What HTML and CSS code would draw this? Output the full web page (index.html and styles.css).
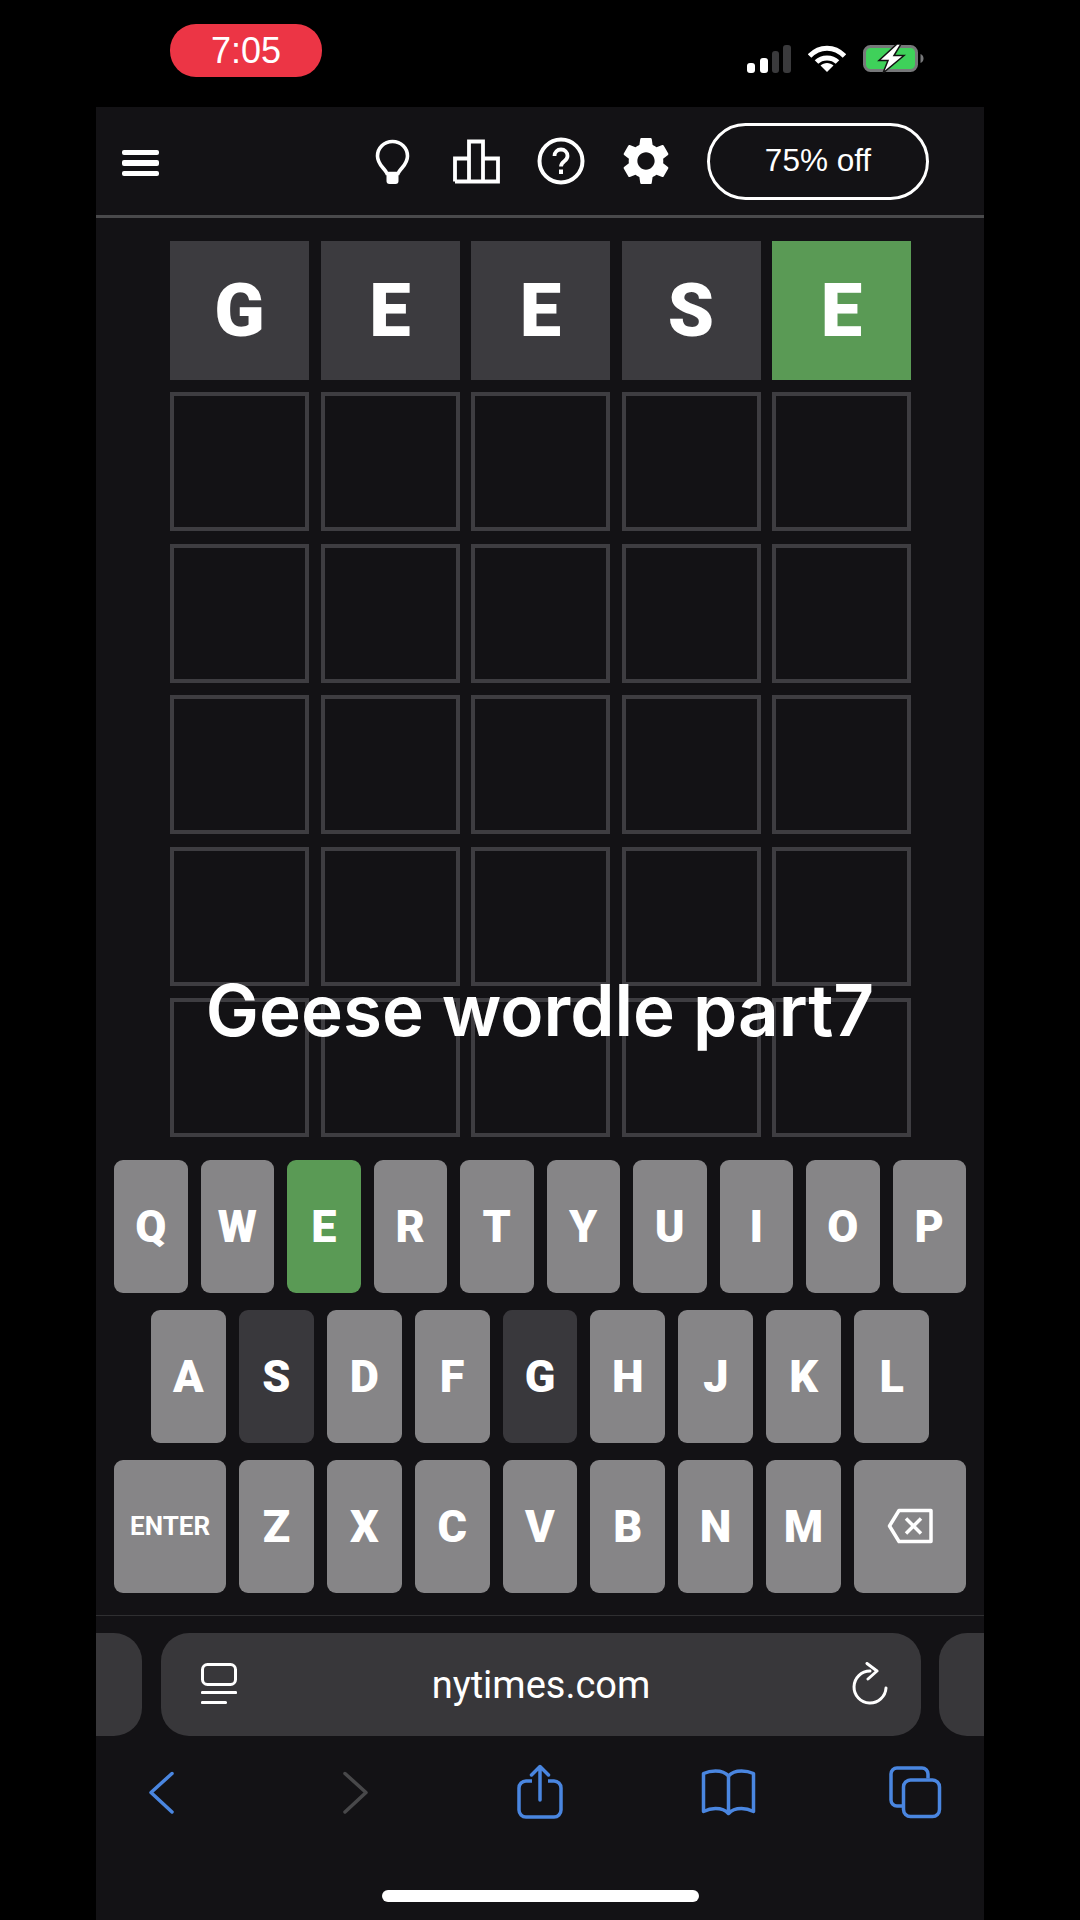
FILE: index.html
```html
<!DOCTYPE html>
<html lang="en">
<head>
  <meta charset="UTF-8" />
  <meta name="viewport" content="width=device-width, initial-scale=1.0"/>
  <title>Wordle</title>
  <link rel="stylesheet" href="styles.css">
</head>
<body>
  <div class="phone">
    <div class="status-bar">
      <div class="clock">7:05</div>
      <div class="status-icons">
        <svg width="44" height="28" viewBox="0 0 44 28">
          <rect x="0" y="18" width="8" height="10" rx="3" fill="#fff"/>
          <rect x="13" y="13" width="8" height="15" rx="3" fill="#fff"/>
          <rect x="25" y="6" width="7" height="22" rx="3" fill="#3a3a3c"/>
          <rect x="36" y="0" width="8" height="28" rx="3" fill="#3a3a3c"/>
        </svg>
        <svg width="38" height="27" viewBox="0 0 38 27">
          <path d="M1.500 11C11.500 .5 26.500 .5 36.500 11" fill="none" stroke="#fff" stroke-width="5"/>
          <path d="M8.500 17C14 11.500 24 11.500 29.500 17" fill="none" stroke="#fff" stroke-width="5"/>
          <path d="M12.500 20.500C16 17 22 17 25.500 20.500L19 27z" fill="#fff"/>
        </svg>
        <svg width="61" height="29" viewBox="0 0 61 29">
          <rect x="1.500" y="2.500" width="52" height="24" rx="6" fill="#3fd15a" stroke="#77787a" stroke-width="3"/>
          <path d="M57.500 10v9c2-.5 3-2.500 3-4.500s-1-4-3-4.500z" fill="#77787a"/>
          <path d="M34 0L16 16.500h9L20 29l21-17.500H31L38 0z" fill="#fff" stroke="#111" stroke-width="1.500"/>
        </svg>
      </div>
    </div>

    <header class="game-header">
      <svg class="menu-icon" width="37" height="26" viewBox="0 0 37 26">
        <rect x="0" y="0" width="37" height="5" rx="2" fill="#fff"/>
        <rect x="0" y="10" width="37" height="6" rx="2" fill="#fff"/>
        <rect x="0" y="21" width="37" height="5" rx="2" fill="#fff"/>
      </svg>
      <div class="header-tools">
        <svg width="48" height="48" viewBox="0 0 48 48">
          <g transform="translate(1 0)">
            <path d="M24.500 4.500c-8.500 0-15 6.500-15 14.500 0 6 3 9 6 12.500 2 2.300 3 3.500 3.500 5h11c.5-1.500 1.500-2.700 3.500-5 3-3.500 6-6.500 6-12.500 0-8-6.500-14.500-15-14.500z" fill="none" stroke="#fff" stroke-width="3.600"/>
            <rect x="18.500" y="35" width="12" height="12" rx="3" fill="#fff"/>
          </g>
        </svg>
        <svg width="48" height="48" viewBox="0 0 48 48">
          <path d="M3 44.500V21.500H17M17 44.500V4.500H31V44.500M31 21.500H46V44.500H3" fill="none" stroke="#fff" stroke-width="3.800"/>
        </svg>
        <svg width="48" height="48" viewBox="0 0 48 48">
          <circle cx="24" cy="24" r="21.500" fill="none" stroke="#fff" stroke-width="4"/>
          <path d="M17.500 19c0-4 2.800-6.500 6.500-6.500s6.500 2.500 6.500 6.500c0 5.500-6.500 5-6.500 10.500" fill="none" stroke="#fff" stroke-width="3.800"/>
          <rect x="22" y="32.500" width="4" height="4.500" fill="#fff"/>
        </svg>
        <svg width="48" height="48" viewBox="2 2 20 20">
          <path fill="#fff" d="M19.140 12.940c.04-.3.06-.61.06-.94 0-.32-.02-.64-.07-.94l2.030-1.580c.18-.14.23-.41.12-.61l-1.920-3.320c-.12-.22-.37-.29-.59-.22l-2.390.96c-.5-.38-1.030-.7-1.620-.94l-.36-2.540c-.04-.24-.24-.41-.48-.41h-3.840c-.24 0-.43.17-.47.41l-.36 2.540c-.59.24-1.130.57-1.620.94l-2.390-.96c-.22-.08-.47 0-.59.22L2.740 8.870c-.12.21-.08.47.12.61l2.030 1.580c-.05.3-.09.63-.09.94s.02.64.07.94l-2.030 1.580c-.18.14-.23.41-.12.61l1.920 3.320c.12.22.37.29.59.22l2.390-.96c.5.38 1.030.7 1.620.94l.36 2.540c.05.24.24.41.48.41h3.840c.24 0 .44-.17.47-.41l.36-2.540c.59-.24 1.130-.56 1.620-.94l2.390.96c.22.08.47 0 .59-.22l1.920-3.320c.12-.22.07-.47-.12-.61l-2.010-1.580zM12 15.600c-1.980 0-3.600-1.620-3.600-3.600s1.620-3.600 3.600-3.600 3.600 1.620 3.600 3.600-1.620 3.600-3.600 3.600z"/>
        </svg>
        <div class="offer-pill">75% off</div>
      </div>
    </header>

    <main class="board">
      <div class="tile absent">G</div>
      <div class="tile absent">E</div>
      <div class="tile absent">E</div>
      <div class="tile absent">S</div>
      <div class="tile correct">E</div>
      <div class="tile"></div><div class="tile"></div><div class="tile"></div><div class="tile"></div><div class="tile"></div>
      <div class="tile"></div><div class="tile"></div><div class="tile"></div><div class="tile"></div><div class="tile"></div>
      <div class="tile"></div><div class="tile"></div><div class="tile"></div><div class="tile"></div><div class="tile"></div>
      <div class="tile"></div><div class="tile"></div><div class="tile"></div><div class="tile"></div><div class="tile"></div>
      <div class="tile"></div><div class="tile"></div><div class="tile"></div><div class="tile"></div><div class="tile"></div>
    </main>

    <section class="keyboard">
      <div class="key-row">
        <div class="key">Q</div><div class="key">W</div><div class="key correct">E</div><div class="key">R</div><div class="key">T</div>
        <div class="key">Y</div><div class="key">U</div><div class="key">I</div><div class="key">O</div><div class="key">P</div>
      </div>
      <div class="key-row middle">
        <div class="key">A</div><div class="key absent">S</div><div class="key">D</div><div class="key">F</div><div class="key absent">G</div>
        <div class="key">H</div><div class="key">J</div><div class="key">K</div><div class="key">L</div>
      </div>
      <div class="key-row">
        <div class="key wide enter">ENTER</div>
        <div class="key">Z</div><div class="key">X</div><div class="key">C</div><div class="key">V</div><div class="key">B</div><div class="key">N</div><div class="key">M</div>
        <div class="key wide">
          <svg width="46" height="36" viewBox="0 0 46 36">
            <path d="M12 2.500H44V33.500H12L2.500 18z" fill="none" stroke="#fff" stroke-width="3.500" stroke-linejoin="round"/>
            <path d="M19 10.500L34 25.500M34 10.500L19 25.500" fill="none" stroke="#fff" stroke-width="3.500"/>
          </svg>
        </div>
      </div>
    </section>

    <div class="caption">Geese wordle part7</div>

    <footer class="browser-bar">
      <div class="url-row">
        <div class="tab-peek left"></div>
        <div class="url-bar">
          <svg width="36" height="42" viewBox="0 0 36 42">
            <rect x="1.500" y="1.500" width="33" height="20" rx="5" fill="none" stroke="#fff" stroke-width="3"/>
            <path d="M1.500 29.500H34.500M1.500 39.500H24.500" fill="none" stroke="#fff" stroke-width="3.200" stroke-linecap="round"/>
          </svg>
          <span class="url-text">nytimes.com</span>
          <svg width="42" height="44" viewBox="0 0 42 44">
            <path d="M19 9A16 16 0 1 0 35 26" fill="none" stroke="#fff" stroke-width="3" stroke-linecap="round"/>
            <path d="M16 1.500L26 9L17 17" fill="none" stroke="#fff" stroke-width="3" stroke-linecap="round" stroke-linejoin="round"/>
          </svg>
        </div>
        <div class="tab-peek right"></div>
      </div>
      <div class="toolbar">
        <svg width="60" height="60" viewBox="0 0 60 60"><path d="M41 11.500L20 30.500L41 50" fill="none" stroke="#4a86e0" stroke-width="3.500" stroke-linecap="round" stroke-linejoin="round"/></svg>
        <svg width="60" height="60" viewBox="0 0 60 60"><path d="M25 11.500L46 30.500L25 50" fill="none" stroke="#48484a" stroke-width="3.500" stroke-linecap="round" stroke-linejoin="round"/></svg>
        <svg width="60" height="60" viewBox="0 0 60 60">
          <path d="M24 19h-6a7 7 0 0 0-7 7v22a7 7 0 0 0 7 7h28a7 7 0 0 0 7-7V26a7 7 0 0 0-7-7h-6" fill="none" stroke="#4a86e0" stroke-width="3.500"/>
          <path d="M32 5V38M23.500 13L32 4.500L40.500 13" fill="none" stroke="#4a86e0" stroke-width="3.500" stroke-linecap="round" stroke-linejoin="round"/>
        </svg>
        <svg width="60" height="60" viewBox="0 0 60 60">
          <path d="M31.500 14c-3-3.500-8-5-13-5-4 0-8 .7-12 2.500V49.500c4-2 8-3 12-3 5 0 10 1.500 13 5 3-3.500 8-5 13-5 4 0 8 1 12 3V11.500c-4-1.800-8-2.500-12-2.500-5 0-10 1.500-13 5zM31.500 14V50" fill="none" stroke="#4a86e0" stroke-width="3.500" stroke-linejoin="round"/>
        </svg>
        <svg width="60" height="60" viewBox="0 0 60 60">
          <rect x="18.500" y="18" width="36" height="36.500" rx="7" fill="none" stroke="#4a86e0" stroke-width="3.500"/>
          <path d="M17 44h-5a6 6 0 0 1-6-6V12a6 6 0 0 1 6-6h25a6 6 0 0 1 6 6v4.500" fill="none" stroke="#4a86e0" stroke-width="3.500"/>
        </svg>
      </div>
      <div class="home-indicator"></div>
    </footer>
  </div>
</body>
</html>
```

FILE: styles.css
```css
* {
  box-sizing: border-box;
}
body {
  margin: 0;
  background-color: #000;
  font-family: "Liberation Sans", Arial, sans-serif;
  color: #fff;
}
.phone {
  position: relative;
  width: 888px;
  height: 1920px;
  margin: 0 auto;
  overflow: hidden;
  background-color: #131215;
}

/* status bar */
.status-bar {
  display: flex;
  justify-content: space-between;
  height: 107px;
  padding: 24px 60px 0 74px;
  background-color: #000;
}
.clock {
  width: 152px;
  height: 53px;
  border-radius: 26px;
  background-color: #ec3545;
  font-size: 36px;
  line-height: 53px;
  text-align: center;
}
.status-icons {
  display: flex;
  align-items: center;
  gap: 17px;
  height: 29px;
  margin-top: 20px;
}

/* game header */
.game-header {
  display: flex;
  align-items: center;
  justify-content: space-between;
  height: 111px;
  padding: 0 55px 0 26px;
  border-bottom: 3px solid #49494b;
}
.menu-icon {
  margin-top: 4px;
}
.header-tools {
  display: flex;
  align-items: center;
  gap: 37px;
}
.offer-pill {
  width: 222px;
  height: 77px;
  border: 3px solid #fff;
  border-radius: 39px;
  font-size: 31.500px;
  line-height: 69px;
  text-align: center;
}

/* board */
.board {
  display: grid;
  grid-template-columns: repeat(5, 139px);
  grid-auto-rows: 139px;
  gap: 12.400px 11.500px;
  padding: 23px 0 0 74px;
}
.tile {
  display: flex;
  align-items: center;
  justify-content: center;
  border: 4.500px solid #3e3d41;
  font-family: Roboto, "Liberation Sans", sans-serif;
  font-size: 74px;
  font-weight: 900;
}
.tile.absent {
  background-color: #3c3b3f;
  border-color: #3c3b3f;
}
.tile.correct {
  border-color: #5a9a55;
  background-color: #5a9a55;
}

/* keyboard */
.keyboard {
  display: flex;
  flex-direction: column;
  gap: 17px;
  padding: 23px 18px 0;
}
.key-row {
  display: flex;
  gap: 13px;
  height: 133px;
}
.key-row.middle {
  padding: 0 37px;
}
.key {
  display: flex;
  flex: 1;
  align-items: center;
  justify-content: center;
  border-radius: 9px;
  background-color: #868587;
  font-family: Roboto, "Liberation Sans", sans-serif;
  font-size: 45px;
  font-weight: 900;
}
.key.wide {
  flex: 1.5;
}
.key.enter {
  font-size: 26px;
  font-weight: 700;
}
.key.correct {
  background-color: #5a9a55;
}
.key.absent {
  background-color: #39383c;
}

/* video caption, sits on top of the board */
.caption {
  position: absolute;
  top: 965px;
  left: 0;
  right: 0;
  font-family: Inter, "Liberation Sans", sans-serif;
  font-size: 71px;
  font-weight: 600;
  line-height: 90px;
  text-align: center;
}

/* safari bar */
.browser-bar {
  margin-top: 22px;
  border-top: 1px solid #2f2f31;
  padding-top: 17px;
}
.url-row {
  display: flex;
  justify-content: space-between;
  height: 103px;
}
.tab-peek {
  width: 46px;
  background-color: #38373a;
}
.tab-peek.left {
  border-radius: 0 28px 28px 0;
}
.tab-peek.right {
  width: 45px;
  border-radius: 28px 0 0 28px;
}
.url-bar {
  display: flex;
  align-items: center;
  justify-content: space-between;
  width: 760px;
  padding: 0 27px 0 40px;
  border-radius: 28px;
  background-color: #38373a;
}
.url-text {
  margin: 2px 6px 0 0;
  font-family: Roboto, "Liberation Sans", sans-serif;
  font-size: 38px;
}
.toolbar {
  display: flex;
  justify-content: space-between;
  margin-top: 26px;
  padding: 0 39px 0 35px;
}
.home-indicator {
  width: 317px;
  height: 12px;
  margin: 68px auto 0;
  border-radius: 6px;
  background-color: #fff;
}
```
